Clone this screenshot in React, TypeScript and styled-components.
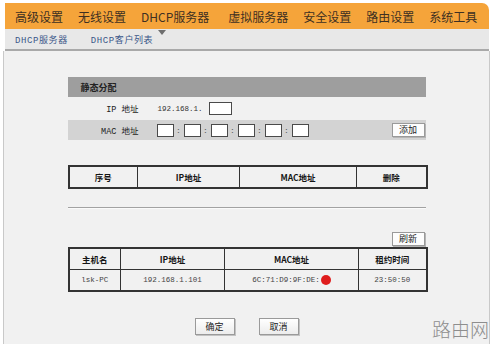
import { createGlobalStyle, styled } from 'styled-components';

const GlobalStyle = createGlobalStyle`
  html, body {
    margin: 0;
    padding: 0;
    background: #fff;
  }
  body {
    width: 495px;
    height: 344px;
    overflow: hidden;
    font-family: "Liberation Mono", "Noto Sans CJK SC", monospace;
  }
`;

const menu = ['高级设置', '无线设置', 'DHCP服务器', '虚拟服务器', '安全设置', '路由设置', '系统工具'];

const App = () => {
  return (
    <Page>
      <GlobalStyle />
      <TopNav>
        {menu.map((m) => (
          <NavItem key={m} $active={m === 'DHCP服务器'}>
            {m}
          </NavItem>
        ))}
      </TopNav>
      <SubNav>
        <SubItem>DHCP服务器</SubItem>
        <SubItem>DHCP客户列表</SubItem>
      </SubNav>
      <Content>
        <Inner>
          <SectionHeader>静态分配</SectionHeader>
          <FormRow>
            <Label>IP 地址</Label>
            <IpValue>
              192.168.1.
              <Box $w={23} />
            </IpValue>
          </FormRow>
          <FormRow $shaded>
            <Label>MAC 地址</Label>
            <MacInputs>
              {[0, 1, 2, 3, 4, 5].map((i) => (
                <MacPart key={i}>
                  <Box $w={17} />
                  {i < 5 && <Sep>:</Sep>}
                </MacPart>
              ))}
            </MacInputs>
            <SmallButton>添加</SmallButton>
          </FormRow>

          <Table $mt={25}>
            <colgroup>
              <col style={{ width: 69 }} />
              <col style={{ width: 102 }} />
              <col style={{ width: 117 }} />
              <col style={{ width: 70 }} />
            </colgroup>
            <tbody>
              <tr>
                <Th>序号</Th>
                <Th>IP地址</Th>
                <Th>MAC地址</Th>
                <Th>删除</Th>
              </tr>
            </tbody>
          </Table>

          <Divider />

          <RefreshRow>
            <SmallButton>刷新</SmallButton>
          </RefreshRow>
          <Table>
            <colgroup>
              <col style={{ width: 52 }} />
              <col style={{ width: 104 }} />
              <col style={{ width: 134 }} />
              <col style={{ width: 68 }} />
            </colgroup>
            <tbody>
              <tr>
                <Th>主机名</Th>
                <Th>IP地址</Th>
                <Th>MAC地址</Th>
                <Th>租约时间</Th>
              </tr>
              <tr>
                <Td>lsk-PC</Td>
                <Td>192.168.1.101</Td>
                <Td>
                  6C:71:D9:9F:DE:<RedDot />
                </Td>
                <Td>23:50:50</Td>
              </tr>
            </tbody>
          </Table>

          <Actions>
            <ActionButton>确定</ActionButton>
            <ActionButton>取消</ActionButton>
          </Actions>
        </Inner>
        <Watermark>路由网</Watermark>
      </Content>
    </Page>
  );
};

export default App;

const Page = styled.div`
  width: 487px;
  margin-left: 3px;
  padding-top: 3px;
`;

const TopNav = styled.div`
  display: flex;
  align-items: center;
  gap: 15px;
  height: 26px;
  margin: 0 1px 0 2px;
  padding-left: 10px;
  background: #f5a43a;
  border-radius: 0 7px 0 0;
  font-family: "Noto Sans CJK SC", sans-serif;
  font-size: 12px;
  color: #3e3022;
  white-space: nowrap;
`;

const NavItem = styled.span<{ $active?: boolean }>`
  position: relative;
  margin-right: ${(p) => (p.$active ? '4px' : '0')};

  &::after {
    content: '';
    display: ${(p) => (p.$active ? 'block' : 'none')};
    position: absolute;
    left: 17px;
    bottom: -10px;
    border-left: 4px solid transparent;
    border-right: 4px solid transparent;
    border-top: 5px solid #6e6e6e;
  }
`;

const SubNav = styled.div`
  display: flex;
  align-items: center;
  gap: 23px;
  height: 20px;
  margin: 0 1px 0 2px;
  padding-left: 10px;
  background: #e8e8e8;
  border-bottom: 2px solid #a9a9a9;
`;

const SubItem = styled.span`
  font-size: 9px;
  letter-spacing: 0.6px;
  color: #3b5788;
`;

const Content = styled.div`
  position: relative;
  height: 293px;
  padding-top: 26px;
  box-sizing: border-box;
  background: #f1f1f1;
  border-left: 1px solid #c9c9c9;
  border-right: 1px solid #c9c9c9;
`;

const Inner = styled.div`
  width: 358px;
  margin: 0 auto;
  display: flex;
  flex-direction: column;
`;

const SectionHeader = styled.div`
  height: 20px;
  display: flex;
  align-items: center;
  padding-left: 13px;
  background: #9e9e9e;
  font-family: "Noto Sans CJK SC", sans-serif;
  font-size: 9px;
  font-weight: 700;
  color: #222;
`;

const FormRow = styled.div<{ $shaded?: boolean }>`
  display: flex;
  align-items: center;
  height: ${(p) => (p.$shaded ? '20px' : '23px')};
  background: ${(p) => (p.$shaded ? '#d3d3d3' : 'transparent')};
  font-size: 8px;
  color: #333;
`;

const Label = styled.span`
  width: 71px;
  text-align: right;
  margin-right: 18px;
  font-size: 8.5px;
  color: #222;
`;

const IpValue = styled.span`
  display: flex;
  align-items: center;
  gap: 6px;
  margin-left: 1px;
  font-size: 7.5px;
  color: #333;
`;

const Box = styled.span<{ $w: number }>`
  display: inline-block;
  width: ${(p) => p.$w}px;
  height: 13px;
  box-sizing: border-box;
  background: #fff;
  border: 1px solid #4a4a4a;
`;

const MacInputs = styled.div`
  display: flex;
  align-items: center;
  flex: 1;
`;

const MacPart = styled.span`
  display: flex;
  align-items: center;
`;

const Sep = styled.span`
  width: 10px;
  text-align: center;
  font-size: 8px;
  color: #555;
`;

const SmallButton = styled.button`
  width: 33px;
  height: 14px;
  padding: 0;
  margin-right: 1px;
  background: #fdfdfd;
  border: 1px solid #9a9a9a;
  box-shadow: 1px 1px 0 #b5b5b5;
  font-family: "Noto Sans CJK SC", sans-serif;
  font-size: 9px;
  line-height: 12px;
  color: #222;
`;

const Table = styled.table<{ $mt?: number }>`
  width: 358px;
  margin-top: ${(p) => p.$mt ?? 0}px;
  border-collapse: collapse;
  table-layout: fixed;
  border: 2px solid #333;
`;

const Th = styled.td`
  height: 20px;
  border: 1.5px solid #333;
  text-align: center;
  font-family: "Noto Sans CJK SC", sans-serif;
  font-size: 8.5px;
  font-weight: 700;
  color: #151515;
  padding: 0;
`;

const Td = styled.td`
  height: 20px;
  border: 1.5px solid #333;
  text-align: center;
  font-size: 7.5px;
  color: #444;
  padding: 0;
`;

const RedDot = styled.span`
  display: inline-block;
  width: 10px;
  height: 10px;
  margin-left: 1px;
  vertical-align: middle;
  border-radius: 50%;
  background: #df1d1d;
`;

const Divider = styled.div`
  height: 1px;
  margin-top: 18px;
  background: #a2a2a2;
  border-bottom: 1px solid #fafafa;
`;

const RefreshRow = styled.div`
  display: flex;
  justify-content: flex-end;
  margin-top: 23px;
  margin-bottom: 1px;
`;

const Actions = styled.div`
  display: flex;
  justify-content: center;
  gap: 24px;
  margin-top: 26px;
`;

const ActionButton = styled.button`
  width: 40px;
  height: 17px;
  padding: 0;
  background: linear-gradient(#ffffff, #ececec);
  border: 1px solid #9a9a9a;
  box-shadow: 1px 1px 0 #c2c2c2;
  font-family: "Noto Sans CJK SC", sans-serif;
  font-size: 9px;
  color: #222;
`;

const Watermark = styled.div`
  position: absolute;
  right: 0;
  top: 266px;
  font-family: "Noto Sans CJK SC", sans-serif;
  font-weight: 300;
  font-size: 19px;
  line-height: 24px;
  color: #8e8e8e;
`;
